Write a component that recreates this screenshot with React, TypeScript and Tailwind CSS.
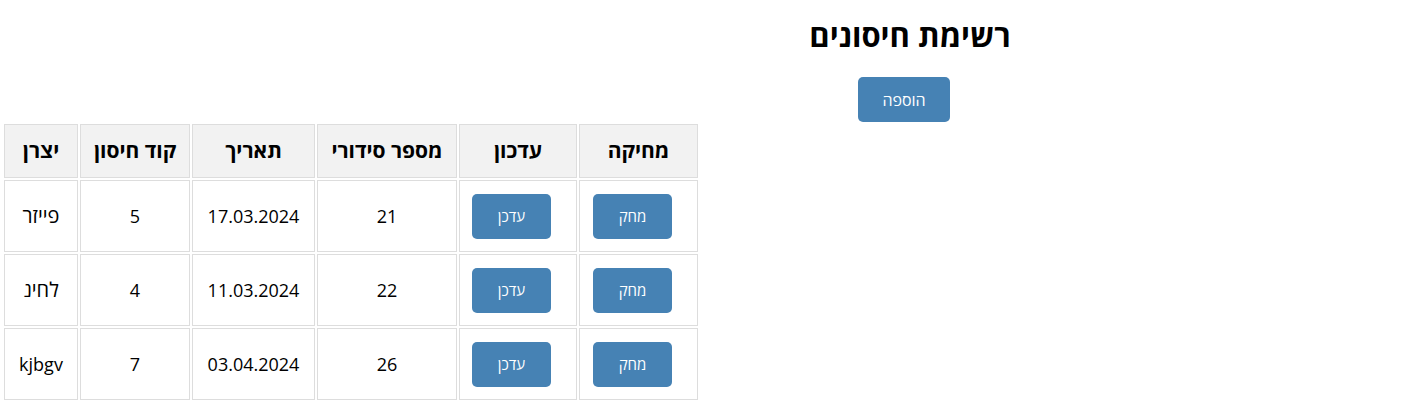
import React from "react";

const rows = [
  { serial: "21", date: "17.03.2024", code: "5", maker: "פייזר", heb: true },
  { serial: "22", date: "11.03.2024", code: "4", maker: "לחינ", heb: true },
  { serial: "26", date: "03.04.2024", code: "7", maker: "kjbgv", heb: false },
];

const font = { fontFamily: '"Open Sans", "DejaVu Sans", sans-serif' };

export default function App() {
  return (
    <div className="bg-white text-black w-[1417px] h-[417px]" style={font}>
      <div className="flex justify-center pl-[403px] pt-[17px]">
        <h1 className="text-[31px] leading-[36px] font-bold" dir="rtl">
          רשימת חיסונים
        </h1>
      </div>
      <div className="flex justify-center pl-[391px] mt-[24px]">
        <button
          dir="rtl"
          className="w-[92px] h-[45px] rounded-[5px] bg-[#4682b4] text-white text-[16px]"
        >
          הוספה
        </button>
      </div>
      <table
        dir="rtl"
        className="table-fixed border-separate border-spacing-[2px] w-[698px] ml-[2px]"
      >
        <thead>
          <tr className="h-[54px]">
            {[
              ["מחיקה", "w-[119px]"],
              ["עדכון", "w-[118px]"],
              ["מספר סידורי", "w-[140px]"],
              ["תאריך", "w-[123px]"],
              ["קוד חיסון", "w-[110px]"],
              ["יצרן", "w-[74px]"],
            ].map(([t, w]) => (
              <th
                key={t}
                className={`${w} border border-[#dddddd] bg-[#f2f2f2] text-center text-[21px] font-bold p-0`}
              >
                {t}
              </th>
            ))}
          </tr>
        </thead>
        <tbody>
          {rows.map((r) => (
            <tr key={r.serial} className="h-[72px]">
              <td className="border border-[#dddddd] p-0 text-left pl-[13px]">
                <button className="w-[79px] h-[45px] rounded-[5px] bg-[#4682b4] text-white text-[15px]">
                  מחק
                </button>
              </td>
              <td className="border border-[#dddddd] p-0 text-left pl-[12px]">
                <button className="w-[79px] h-[45px] rounded-[5px] bg-[#4682b4] text-white text-[15px]">
                  עדכן
                </button>
              </td>
              <td className="border border-[#dddddd] p-0 text-center text-[18px]">{r.serial}</td>
              <td className="border border-[#dddddd] p-0 text-center text-[18px]">{r.date}</td>
              <td className="border border-[#dddddd] p-0 text-center text-[18px]">{r.code}</td>
              <td
                className={`border border-[#dddddd] p-0 text-center ${r.heb ? "text-[20px]" : "text-[18px]"}`}
              >
                {r.maker}
              </td>
            </tr>
          ))}
        </tbody>
      </table>
    </div>
  );
}
